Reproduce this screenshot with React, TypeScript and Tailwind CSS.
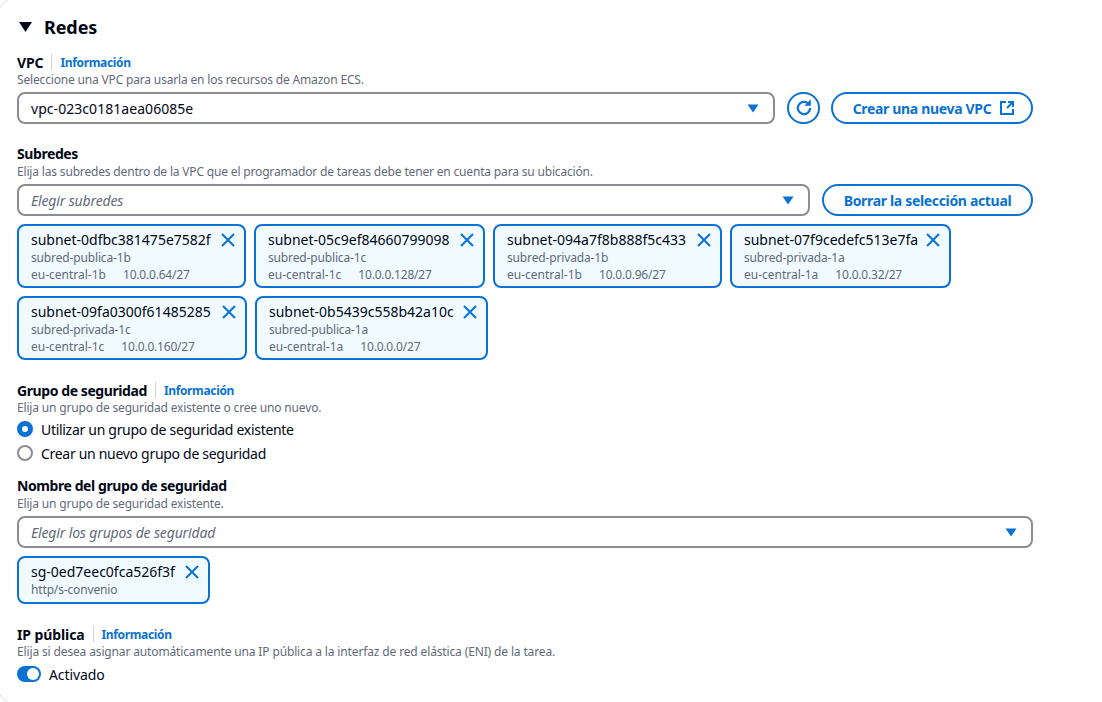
interface Token {
  id: string
  name: string
  zone: string
  cidr: string
  width: string
}

const rowOne: Token[] = [
  { id: 'subnet-0dfbc381475e7582f', name: 'subred-publica-1b', zone: 'eu-central-1b', cidr: '10.0.0.64/27', width: 'w-[229px]' },
  { id: 'subnet-05c9ef84660799098', name: 'subred-publica-1c', zone: 'eu-central-1c', cidr: '10.0.0.128/27', width: 'w-[231px]' },
  { id: 'subnet-094a7f8b888f5c433', name: 'subred-privada-1b', zone: 'eu-central-1b', cidr: '10.0.0.96/27', width: 'w-[229px]' },
  { id: 'subnet-07f9cedefc513e7fa', name: 'subred-privada-1a', zone: 'eu-central-1a', cidr: '10.0.0.32/27', width: 'w-[221px]' },
]

const rowTwo: Token[] = [
  { id: 'subnet-09fa0300f61485285', name: 'subred-privada-1c', zone: 'eu-central-1c', cidr: '10.0.0.160/27', width: 'w-[230px]' },
  { id: 'subnet-0b5439c558b42a10c', name: 'subred-publica-1a', zone: 'eu-central-1a', cidr: '10.0.0.0/27', width: 'w-[233px]' },
]

function Caret() {
  return (
    <svg width="12" height="9" viewBox="0 0 12 9">
      <path d="M0.5 0.5h11L6 8.5z" fill="#0972d3" />
    </svg>
  )
}

function Dismiss() {
  return (
    <svg width="16" height="16" viewBox="0 0 16 16" fill="none" stroke="#0972d3" strokeWidth="2" className="shrink-0">
      <path d="M2 2l12 12M14 2L2 14" />
    </svg>
  )
}

function Label({ text, info, loose }: { text: string; info?: boolean; loose?: boolean }) {
  return (
    <div className="flex items-center h-[20px]">
      <span className={`text-[14px] font-bold text-[#000716] ${loose ? 'tracking-[-0.1px]' : 'tracking-[-0.42px]'}`}>{text}</span>
      {info && (
        <>
          <span className="w-px h-[16px] bg-[#d1d5db] mx-[8px]" />
          <span className="text-[12px] font-bold tracking-[-0.35px] pt-[2px] text-[#0972d3]">Información</span>
        </>
      )}
    </div>
  )
}

function Hint({ text, className }: { text: string; className?: string }) {
  return <p className={`text-[12px] leading-[16px] text-[#5f6b7a] ${className ?? 'tracking-[-0.17px]'}`}>{text}</p>
}

function TokenCard({ token }: { token: Token }) {
  return (
    <div className={`${token.width} shrink-0 border-2 border-[#0972d3] rounded-[8px] bg-[#f1faff] pl-[12px] pr-[8px] pt-[3px] h-[64px]`}>
      <div className="flex items-center justify-between h-[21px]">
        <span className="text-[14px] text-[#000716]">{token.id}</span>
        <Dismiss />
      </div>
      <div className="text-[12px] leading-[16px] tracking-[-0.15px] text-[#5f6b7a]">{token.name}</div>
      <div className="text-[12px] leading-[16px] mt-[1px] text-[#5f6b7a] flex gap-[17px]">
        <span>{token.zone}</span>
        <span className="tracking-[-0.2px]">{token.cidr}</span>
      </div>
    </div>
  )
}

function Select({ text, placeholder, className }: { text: string; placeholder?: boolean; className?: string }) {
  return (
    <div className={`flex items-center justify-between h-[32px] border-2 border-[#8c8c94] rounded-[8px] pl-[12px] pr-[14px] ${className ?? ''}`}>
      <span className={placeholder ? 'text-[14px] italic tracking-[-0.15px] text-[#5f6b7a]' : 'text-[14px] tracking-[0.05px] text-[#000716]'}>{text}</span>
      <Caret />
    </div>
  )
}

function PillButton({ text, icon, className }: { text: string; icon?: boolean; className?: string }) {
  return (
    <div className={`flex items-center justify-center gap-[8px] h-[32px] border-2 border-[#0972d3] rounded-full text-[14px] font-bold tracking-[-0.33px] text-[#0972d3] ${className ?? ''}`}>
      {text}
      {icon && (
        <svg width="16" height="16" viewBox="0 0 16 16" fill="none" stroke="#0972d3" strokeWidth="2">
          <path d="M7 2H2v12h12V9" />
          <path d="M9 2h5v5M14 2L8 8" />
        </svg>
      )}
    </div>
  )
}

export default function App() {
  return (
    <div className="relative w-[1102px] h-[702px] bg-white overflow-hidden pl-[17px] font-['Noto_Sans',sans-serif]">
      {/* corner of the surrounding card, only the left arcs fall inside the shot */}
      <div className="absolute -left-[2px] -top-[2px] w-[1140px] h-[706px] rounded-2xl border border-[#dcdcdc]" />

      <div className="flex items-center gap-[11px] pt-[12px] h-[42px]">
        <svg width="14" height="10" viewBox="0 0 14 10" className="ml-[2px]">
          <path d="M0 0h13L6.500 10z" fill="#000716" />
        </svg>
        <h2 className="text-[18px] font-bold tracking-[-0.1px] text-[#000716]">Redes</h2>
      </div>

      <div className="mt-[10px]">
        <Label text="VPC" info loose />
        <Hint text="Seleccione una VPC para usarla en los recursos de Amazon ECS." />
        <div className="flex items-center mt-[4px]">
          <Select text="vpc-023c0181aea06085e" className="w-[758px]" />
          <div className="ml-[12px] w-[33px] h-[32px] rounded-full border-2 border-[#0972d3] flex items-center justify-center">
            <svg width="18" height="18" viewBox="0 0 16 16" fill="none" stroke="#0972d3" strokeWidth="2">
              <path d="M13.500 8a5.500 5.500 0 1 1-1.700-4" />
              <path d="M13.500 1.500v4h-4z" fill="#0972d3" strokeWidth="1" />
            </svg>
          </div>
          <PillButton text="Crear una nueva VPC" icon className="ml-[11px] w-[202px] pl-[4px]" />
        </div>
      </div>

      <div className="mt-[20px]">
        <div className="-mt-px">
          <Label text="Subredes" />
        </div>
        <div className="mt-px">
          <Hint text="Elija las subredes dentro de la VPC que el programador de tareas debe tener en cuenta para su ubicación." />
        </div>
        <div className="flex items-center mt-[4px]">
          <Select text="Elegir subredes" placeholder className="w-[793px]" />
          <PillButton text="Borrar la selección actual" className="ml-[12px] w-[211px]" />
        </div>
        <div className="flex gap-[8px] mt-[8px]">
          {rowOne.map((t) => (
            <TokenCard key={t.id} token={t} />
          ))}
        </div>
        <div className="flex gap-[8px] mt-[8px]">
          {rowTwo.map((t) => (
            <TokenCard key={t.id} token={t} />
          ))}
        </div>
      </div>

      <div className="mt-[20px]">
        <Label text="Grupo de seguridad" info />
        <Hint text="Elija un grupo de seguridad existente o cree uno nuevo." />
        <div className="flex items-center gap-[8px] mt-[1px] h-[24px] text-[14px] tracking-[-0.3px] text-[#000716]">
          <span className="w-[16px] h-[16px] rounded-full border-[5px] border-[#0972d3] bg-white" />
          Utilizar un grupo de seguridad existente
        </div>
        <div className="flex items-center gap-[8px] h-[24px] text-[14px] tracking-[-0.3px] text-[#000716]">
          <span className="w-[16px] h-[16px] rounded-full border-2 border-[#8c8c94] bg-white" />
          Crear un nuevo grupo de seguridad
        </div>
      </div>

      <div className="mt-[10px]">
        <Label text="Nombre del grupo de seguridad" />
        <div className="mt-px">
          <Hint text="Elija un grupo de seguridad existente." />
        </div>
        <Select text="Elegir los grupos de seguridad" placeholder className="w-[1016px] mt-[4px]" />
        <div className="mt-[8px] w-[193px] h-[48px] border-2 border-[#0972d3] rounded-[8px] bg-[#f1faff] pl-[12px] pr-[8px] pt-[3px]">
          <div className="flex items-center justify-between h-[21px]">
            <span className="text-[14px] text-[#000716]">sg-0ed7eec0fca526f3f</span>
            <Dismiss />
          </div>
          <div className="text-[12px] leading-[16px] tracking-[-0.15px] text-[#5f6b7a]">http/s-convenio</div>
        </div>
      </div>

      <div className="mt-[20px]">
        <Label text="IP pública" info loose />
        <Hint text="Elija si desea asignar automáticamente una IP pública a la interfaz de red elástica (ENI) de la tarea." className="tracking-[-0.14px]" />
        <div className="flex items-center gap-[8px] mt-[4px] h-[20px] text-[14px] tracking-[-0.1px] text-[#000716]">
          <span className="w-[24px] h-[16px] rounded-full bg-[#0972d3] flex items-center justify-end pr-[2px]">
            <span className="w-[12px] h-[12px] rounded-full bg-white" />
          </span>
          Activado
        </div>
      </div>
    </div>
  )
}
